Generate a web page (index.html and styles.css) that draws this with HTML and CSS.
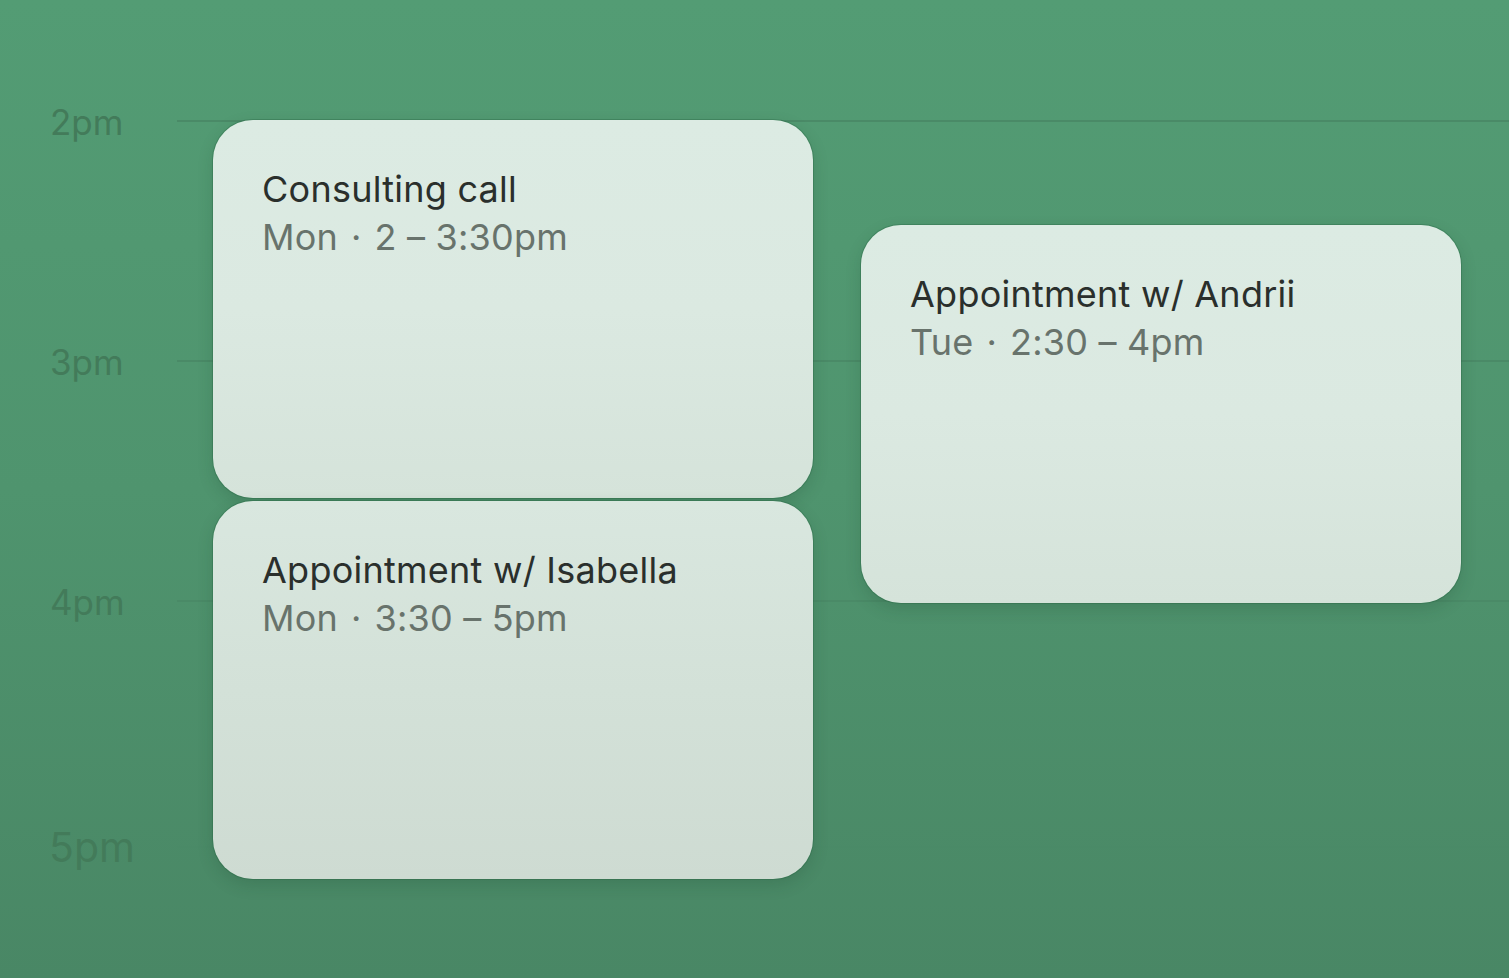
FILE: index.html
```html
<html lang="en">
<head>
  <meta charset="UTF-8">
  <link rel="stylesheet" href="styles.css">
</head>
<body>
<div class="calendar">
  <div class="hours">
    <div class="hour"><span class="hour-label">2pm</span><span class="hour-line"></span></div>
    <div class="hour"><span class="hour-label">3pm</span><span class="hour-line"></span></div>
    <div class="hour"><span class="hour-label">4pm</span><span class="hour-line"></span></div>
    <div class="hour hour-last"><span class="hour-label">5pm</span><span class="hour-line"></span></div>
  </div>

  <div class="event" style="top: 120px; left: 213px;">
    <div class="event-title">Consulting call</div>
    <div class="event-time">Mon<span class="event-dot">·</span>2 – 3:30pm</div>
  </div>
  <div class="event event-late" style="top: 501px; left: 213px;">
    <div class="event-title">Appointment w/ Isabella</div>
    <div class="event-time">Mon<span class="event-dot">·</span>3:30 – 5pm</div>
  </div>
  <div class="event" style="top: 225px; left: 861px;">
    <div class="event-title">Appointment w/ Andrii</div>
    <div class="event-time">Tue<span class="event-dot">·</span>2:30 – 4pm</div>
  </div>
</div>
</body>
</html>
```

FILE: styles.css
```css
html, body {
  margin: 0;
  height: 100%;
}

body {
  font-family: Inter, "Noto Sans", sans-serif;
  font-feature-settings: "calt" 0;
  background: linear-gradient(180deg, #539c74 0%, #4f946e 50%, #498765 100%);
  overflow: hidden;
}

.calendar {
  position: relative;
  height: 100%;
  overflow: hidden;
}

.hours {
  display: flex;
  flex-direction: column;
  padding-top: 98px;
}

.hour {
  display: flex;
  align-items: flex-start;
  height: 240px;
}

.hour-last {
  height: auto;
}

.hour-label {
  width: 127px;
  padding-left: 50px;
  font-size: 35px;
  line-height: 48px;
  color: #437b5a;
  flex-shrink: 0;
}

.hour-last .hour-label {
  font-size: 41px;
  padding-left: 49px;
  width: 128px;
  padding-top: 5px;
}

.hour-line {
  flex: 1;
  height: 2px;
  margin-top: 22px;
  background-color: #4a8a67;
}

.hour-last .hour-line {
  margin-top: 28px;
}

.event {
  position: absolute;
  width: 600px;
  height: 378px;
  box-sizing: border-box;
  padding: 45px 49px;
  border-radius: 40px;
  background: linear-gradient(180deg, #dcebe3 0%, #dbe9e1 50%, #d5e3da 100%);
  box-shadow: 0 0 0 1px rgba(40, 100, 65, 0.35), 0 6px 16px rgba(20, 60, 40, 0.18);
}

.event-late {
  background: linear-gradient(180deg, #d9e7df 0%, #d3e1d8 50%, #cedbd2 100%);
}

.event-title {
  font-size: 36px;
  line-height: 48px;
  letter-spacing: 0.25px;
  color: #2a2f2c;
}

.event-time {
  font-size: 36px;
  line-height: 48px;
  letter-spacing: 0.2px;
  color: #68736c;
}

.event-dot {
  margin: 0 13px;
}
```
